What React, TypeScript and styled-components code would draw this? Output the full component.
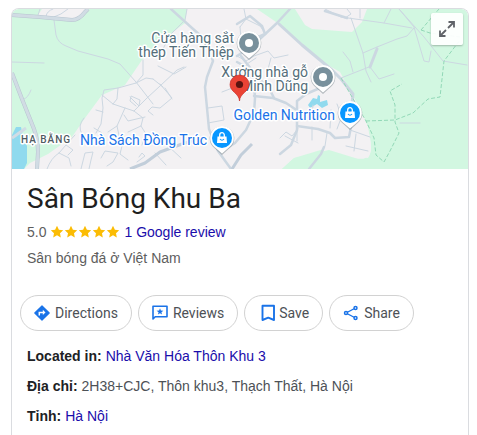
import React from "react";
import styled, { createGlobalStyle } from "styled-components";

const GlobalStyle = createGlobalStyle`
  * { box-sizing: border-box; }
  body {
    margin: 0;
    background: #fff;
    color: #4d5156;
    font: 14px/20px "Liberation Sans", Arial, sans-serif;
  }
`;

const Page = styled.main`
  padding: 8px 8px 0 11px;
`;

const Card = styled.article`
  border: 1px solid #dadce0;
  border-bottom: 0;
  border-radius: 8px 8px 0 0;
  overflow: hidden;
`;

const MapArea = styled.section`
  position: relative;
  height: 160px;
  background: #f3f1f3;
`;

const MapDrawing = styled.svg`
  display: block;
  width: 100%;
  height: 100%;
`;

const MapLabel = styled.text<{ $tone?: "shop" | "area" }>`
  font-family: Roboto, sans-serif;
  font-size: ${(p) => (p.$tone === "area" ? 10 : 14)}px;
  font-weight: ${(p) => (p.$tone === "area" ? 500 : 400)};
  letter-spacing: ${(p) => (p.$tone === "area" ? "1px" : "normal")};
  fill: ${(p) => (p.$tone === "shop" ? "#1a73e8" : p.$tone === "area" ? "#4f5b62" : "#546e7a")};
  stroke: #fff;
  stroke-width: 3px;
  stroke-linejoin: round;
  paint-order: stroke;
`;

const ExpandButton = styled.button`
  position: absolute;
  top: 4px;
  right: 5px;
  display: grid;
  place-items: center;
  width: 32px;
  height: 32px;
  padding: 0;
  border: 0;
  border-radius: 2px;
  background: rgba(255, 255, 255, 0.93);
  box-shadow: 0 1px 2px rgba(0, 0, 0, 0.25);
  cursor: pointer;
`;

const Header = styled.header`
  padding: 12px 15px 0;
`;

const Title = styled.h1`
  margin: 0;
  color: #1f1f1f;
  font: 400 28px/36px "Google Sans", Roboto, sans-serif;
`;

const Rating = styled.div`
  display: flex;
  align-items: center;
  gap: 4px;
  margin-top: 5px;
  color: #5e5e5e;
`;

const Category = styled.p`
  margin: 6px 0 0;
  color: #5e5e5e;
`;

const Link = styled.a`
  color: #1a0dab;
  text-decoration: none;
`;

const Actions = styled.nav`
  display: flex;
  flex-wrap: wrap;
  gap: 6px;
  padding: 27px 8px 0;
`;

const ActionButton = styled.button`
  display: flex;
  align-items: center;
  gap: 3px;
  height: 36px;
  padding: 0 13px 0 11px;
  border: 1px solid #d2d2d2;
  border-radius: 18px;
  background: #fff;
  color: #4d5156;
  font: 400 14px/20px "Google Sans", Roboto, sans-serif;
  cursor: pointer;
`;

const Facts = styled.dl`
  display: grid;
  gap: 10px;
  margin: 0;
  padding: 15px 15px 9px;
`;

const Fact = styled.div`
  display: flex;
  gap: 4px;
`;

const FactName = styled.dt`
  color: #202124;
  font-weight: 700;
`;

const FactValue = styled.dd`
  margin: 0;
`;

const minorRoads = [
  "M54 20 L56 35 Q58 43 66 46 L78 51 L108 59 L120 64 L136 82 L153 104",
  "M12 62 L44 63",
  "M24 99 Q28 98 31 90",
  "M38 15 L40 9 M46 16 Q47 11 53 9 M54 17 Q61 15 68 9",
  "M143 60 V75 L136 83 L118 88 L104 90 L102 98 L103 108 L101 124 L96 133",
  "M102 95 L113 104 L125 108 L134 111 L143 118 L141 126 L128 132",
  "M118 88 L117 99 L113 104 M125 108 L117 126 L120 140 M117 126 L108 132",
  "M134 111 L147 98 L160 86 L177 70 L184 67 M136 83 L146 78 L153 79",
  "M130 97 L139 106 L140 100 L131 96 L130 101 L136 106",
  "M96 110 L103 112 M94 128 L102 133 L100 141 M84 118 Q77 126 82 134",
  "M145 117 L128 121 L124 115 M141 126 L146 134 L142 145",
  "M153 115 L148 111 L152 107 L160 108 L172 98 L160 84",
  "M158 66 L174 74 L186 67 M172 99 L165 88 M153 79 L163 87",
  "M160 55 L170 35 L185 20 L187 9",
  "M47 169 Q51 158 59 153 L66 145 L75 135 M59 153 L69 158 L71 166",
  "M66 145 L73 150 L68 155 M81 169 L85 153 L93 152 L91 160 L89 169",
  "M101 158 L105 151 L118 153 L113 162 L107 166 M128 160 L120 154 L122 146",
  "M137 162 L145 156 L142 153 L139 157 M155 153 L166 165 M167 145 L181 158",
  "M208 108 L222 106 L224 120 L208 123",
  "M235 87 L245 82 L253 85 M253 85 L239 77 L247 64 L256 58",
  "M240 27 L246 19 L260 26 L266 34 M246 19 L244 9 M237 56 L246 61 L254 56 L268 51 L274 58 L288 55 M271 58 L268 69",
  "M240 27 L241 39 M222 92 L235 87",
  "M347 9 L351 14 L345 18 M360 9 L360 18 M325 9 L341 17 L384 23 L412 28",
  "M351 18 L363 53 L366 71 L371 82 M363 53 L377 47 M341 78 L369 67",
  "M343 52 L350 61 L353 72 M384 23 L391 9 M399 9 L414 27 L424 61 L429 62 L431 51 M399 9 L424 37 L443 61 L467 65",
  "M377 47 L397 39 L407 36 L414 28 M370 67 L379 79 L394 74",
  "M280 138 L286 132 L292 136 L298 129 M297 126 V141 M312 127 V140 M327 133 L325 146",
  "M330 128 L331 110 M337 129 L340 121 M350 130 L370 137 M356 134 L354 151 M346 146 L368 151",
  "M320 113 L329 116 M312 118 L313 105 M340 112 L337 104",
  "M400 123 H420 M285 136 L298 143",
];

const streets = [
  "M171 9 L192 28 L201 36 L208 47 L213 61 L207 77 L205 87 L209 129 L218 151 L231 169",
  "M237 56 L251 47 L262 37 L277 23 L290 9",
  "M237 24 L250 16 L262 26 L265 34 L256 38",
  "M237 62 L246 67 L254 82 L255 98 L254 113 L246 130 L235 143 L224 150",
  "M254 96 L273 98 L286 103 L298 111 M274 98 L269 88 L258 78 L241 56",
  "M297 101 L306 94 L320 88 M297 101 L297 130 L291 145 L280 154",
  "M297 126 L318 129 L330 133 L335 138 L349 137 L351 127",
  "M325 11 L347 18 M309 169 L321 154 L324 147",
];

const Pin = ({ x, y, fill, shop }: { x: number; y: number; fill: string; shop?: boolean }) => (
  <g transform={`translate(${x} ${y})`}>
    <path d="M0 17 L-8 9.800 A12.300 12.300 0 1 1 8 9.800 Z" fill="#78858c" opacity=".5" />
    <path d="M0 15.500 L-7.500 9 A11.800 11.800 0 1 1 7.500 9 Z" fill="#fff" />
    <circle r="10" fill={fill} />
    {shop ? (
      <>
        <path d="M-4.500 -1.500 H4.500 L5 5 H-5 Z" fill="#fff" />
        <path d="M-2.300 -1 V-3 A2.300 2.300 0 0 1 2.300 -3 V-1" fill="none" stroke="#fff" strokeWidth="1.300" />
        <path d="M-2 1 Q0 3.500 2 1" fill="none" stroke={fill} strokeWidth="1.100" />
      </>
    ) : (
      <circle r="4" fill="#fff" />
    )}
  </g>
);

const LocalMap = () => (
  <MapDrawing viewBox="12 9 456 160" preserveAspectRatio="xMidYMid slice" role="img" aria-label="Map">
    <rect x="12" y="9" width="456" height="160" fill="#f3f1f3" />
    <g fill="#d2f7e1">
      <path d="M12 9 H187 L185 23 L160 42 L142 60 L125 85 L102 95 L85 118 L72 137 L48 154 L30 163 L24 169 H12 Z" />
      <path d="M257 9 H468 V169 H282 L294 158 L329 149 L368 158 Q371 154 371 147 L368 127 L363 115 L352 94 L340 72 L326 64 L300 44 L279 24 Z" />
    </g>
    <path d="M295 9 L305 25 L312 29 L352 32 L362 22 L367 9 Z" fill="#f3f1f3" />
    <path d="M326 64 L352 94 L363 115 Q371 135 371 147 Q371 162 355 158 L329 150 L294 158 L278 169 H265 V80 Z" fill="#f3f1f3" />
    <path d="M282 169 L294 158 L324 149 L303 169 Z" fill="#d2f7e1" />
    <path d="M38 15 L42 9 H88 L82 18 L72 21 L38 18 Z" fill="#f3f1f3" />
    <path d="M12 135 L16 127 L21 127 L24 140 L27 146 V163 L24 169 H12 Z" fill="#90daee" />
    <path d="M308 105 L313 98 L317 99 L318 95 L320 96 L320 102 L327 100 L328 105 L322 108 L317 104 L310 108 Z" fill="#90daee" />
    <g fill="none" stroke="#ccd7e1" strokeLinecap="round" strokeLinejoin="round">
      <g strokeWidth="1">{minorRoads.map((d) => <path key={d} d={d} />)}</g>
      <g strokeWidth="2.500">{streets.map((d) => <path key={d} d={d} />)}</g>
      <path d="M279 24 L302 45 L320 60 L332 70 L341 79 L353 94 L352 104 M377 49 L370 67" strokeWidth="3" />
    </g>
    <g fill="none" strokeLinejoin="round">
      <path d="M12 15 L40 17 L72 20 Q79 20 85 12 L88 9 M12 73 L22 99 L34 129 Q38 140 38 152 L37 169" stroke="#b8c5d0" strokeWidth="4" />
      <path d="M12 15 L40 17 L72 20 Q79 20 85 12 L88 9 M12 73 L22 99 L34 129 Q38 140 38 152 L37 169 M12 138 L26 128" stroke="#d1dce4" strokeWidth="3" />
      <path d="M130 169 L145 163 L160 152 L182 144 L202 138 M232 169 L241 155 L252 144" stroke="#c2ceda" strokeWidth="3" />
    </g>
    <g fill="none" stroke="#92d8b7" strokeWidth="1" strokeDasharray="4 2">
      <path d="M341 78 L366 121 L374 138 L376 155 L384 162 L390 151 L399 133 L395 122 V105 L390 91 L402 84" />
      <path d="M366 121 L395 120 L413 113 L428 99 L440 97 L444 61 L460 40 M421 30 L439 9 M421 30 L430 33 L460 37" />
    </g>
    <g textAnchor="end">
      <MapLabel x="234" y="43">Cửa hàng sắt</MapLabel>
      <MapLabel x="234" y="57">thép Tiến Thiệp</MapLabel>
      <MapLabel x="308" y="77">Xưởng nhà gỗ</MapLabel>
      <MapLabel x="308" y="91">Minh Dũng</MapLabel>
      <MapLabel x="335" y="120" $tone="shop">Golden Nutrition</MapLabel>
      <MapLabel x="207" y="145" $tone="shop">Nhà Sách Đồng Trúc</MapLabel>
    </g>
    <MapLabel x="21" y="143" $tone="area">HẠ BẰNG</MapLabel>
    <Pin x={249} y={43} fill="#78909c" />
    <Pin x={323} y={77} fill="#78909c" />
    <Pin x={350} y={113} fill="#0897ff" shop />
    <Pin x={222} y={138} fill="#0897ff" shop />
    <path d="M239.500 101 C239 93 230 92 230 84.500 A9.500 9.500 0 1 1 249 84.500 C249 92 240 93 239.500 101 Z" fill="#ea4335" stroke="#c5221f" strokeWidth=".6" />
    <circle cx="239.500" cy="84.500" r="3.600" fill="#5b1410" />
  </MapDrawing>
);

const ExpandIcon = () => (
  <svg width="18" height="18" viewBox="0 0 18 18" fill="none" stroke="#5f6368" strokeWidth="1.800" aria-hidden="true">
    <path d="M10.500 2 H16 V7.500 M16 2 L10 8 M2 10.500 V16 H7.500 M2 16 L8 10" />
  </svg>
);

const starPath = "M7 .8 L8.900 4.700 L13.200 5.200 L10 8.200 L10.800 12.400 L7 10.300 L3.200 12.400 L4 8.200 L.8 5.200 L5.100 4.700 Z";

const Stars = () => (
  <svg width="70" height="14" viewBox="0 0 70 14" fill="#fbbc04" role="img" aria-label="Rated 5.0 out of 5">
    {[0, 14, 28, 42, 56].map((x) => <path key={x} d={starPath} transform={`translate(${x} 0)`} />)}
  </svg>
);

const ActionIcon = ({ children }: { children: React.ReactNode }) => (
  <svg width="20" height="20" viewBox="0 0 20 20" fill="none" stroke="#1a73e8" strokeWidth="1.600" aria-hidden="true">
    {children}
  </svg>
);

const actions = [
  {
    label: "Directions",
    icon: (
      <>
        <path d="M10 2.800 L17.200 10 L10 17.200 L2.800 10 Z" fill="#1a73e8" strokeLinejoin="round" strokeWidth="1.200" />
        <path d="M7.300 12.500 V9.400 H11.500" stroke="#fff" strokeWidth="1.500" />
        <path d="M10.800 6.700 L13.500 9.400 L10.800 12.100 Z" fill="#fff" stroke="none" />
      </>
    ),
  },
  {
    label: "Reviews",
    icon: (
      <>
        <path d="M3 16 V3.300 H17 V13.800 H5.200 Z" strokeLinejoin="round" />
        <path d="M10 5.200 L10.900 7.600 L13.400 7.700 L11.400 9.200 L12.100 11.600 L10 10.200 L7.900 11.600 L8.600 9.200 L6.600 7.700 L9.100 7.600 Z" fill="#1a73e8" stroke="none" />
      </>
    ),
  },
  {
    label: "Save",
    icon: <path d="M6.500 2.800 H18 V17 L12.250 14.600 L6.500 17 Z" strokeWidth="1.900" strokeLinejoin="round" />,
  },
  {
    label: "Share",
    icon: (
      <>
        <path d="M14.500 5 L5 10 L14.500 15" strokeWidth="1.300" />
        <g fill="#fff" strokeWidth="1.500">
          <circle cx="14.500" cy="4.900" r="1.500" />
          <circle cx="5" cy="10" r="1.500" />
          <circle cx="14.500" cy="15.100" r="1.500" />
        </g>
      </>
    ),
  },
];

const facts = [
  { name: "Located in:", value: "Nhà Văn Hóa Thôn Khu 3", linked: true },
  { name: "Địa chỉ:", value: "2H38+CJC, Thôn khu3, Thạch Thất, Hà Nội", linked: false },
  { name: "Tỉnh:", value: "Hà Nội", linked: true },
];

export default function App() {
  return (
    <Page>
      <GlobalStyle />
      <Card>
        <MapArea>
          <LocalMap />
          <ExpandButton type="button" aria-label="Expand map"><ExpandIcon /></ExpandButton>
        </MapArea>
        <Header>
          <Title>Sân Bóng Khu Ba</Title>
          <Rating>
            <span>5.0</span>
            <Stars />
            <Link href="#reviews">1 Google review</Link>
          </Rating>
          <Category>Sân bóng đá ở Việt Nam</Category>
        </Header>
        <Actions aria-label="Place actions">
          {actions.map(({ label, icon }) => (
            <ActionButton key={label} type="button">
              <ActionIcon>{icon}</ActionIcon>
              {label}
            </ActionButton>
          ))}
        </Actions>
        <Facts>
          {facts.map(({ name, value, linked }) => (
            <Fact key={name}>
              <FactName>{name}</FactName>
              <FactValue>{linked ? <Link href="#place">{value}</Link> : value}</FactValue>
            </Fact>
          ))}
        </Facts>
      </Card>
    </Page>
  );
}
